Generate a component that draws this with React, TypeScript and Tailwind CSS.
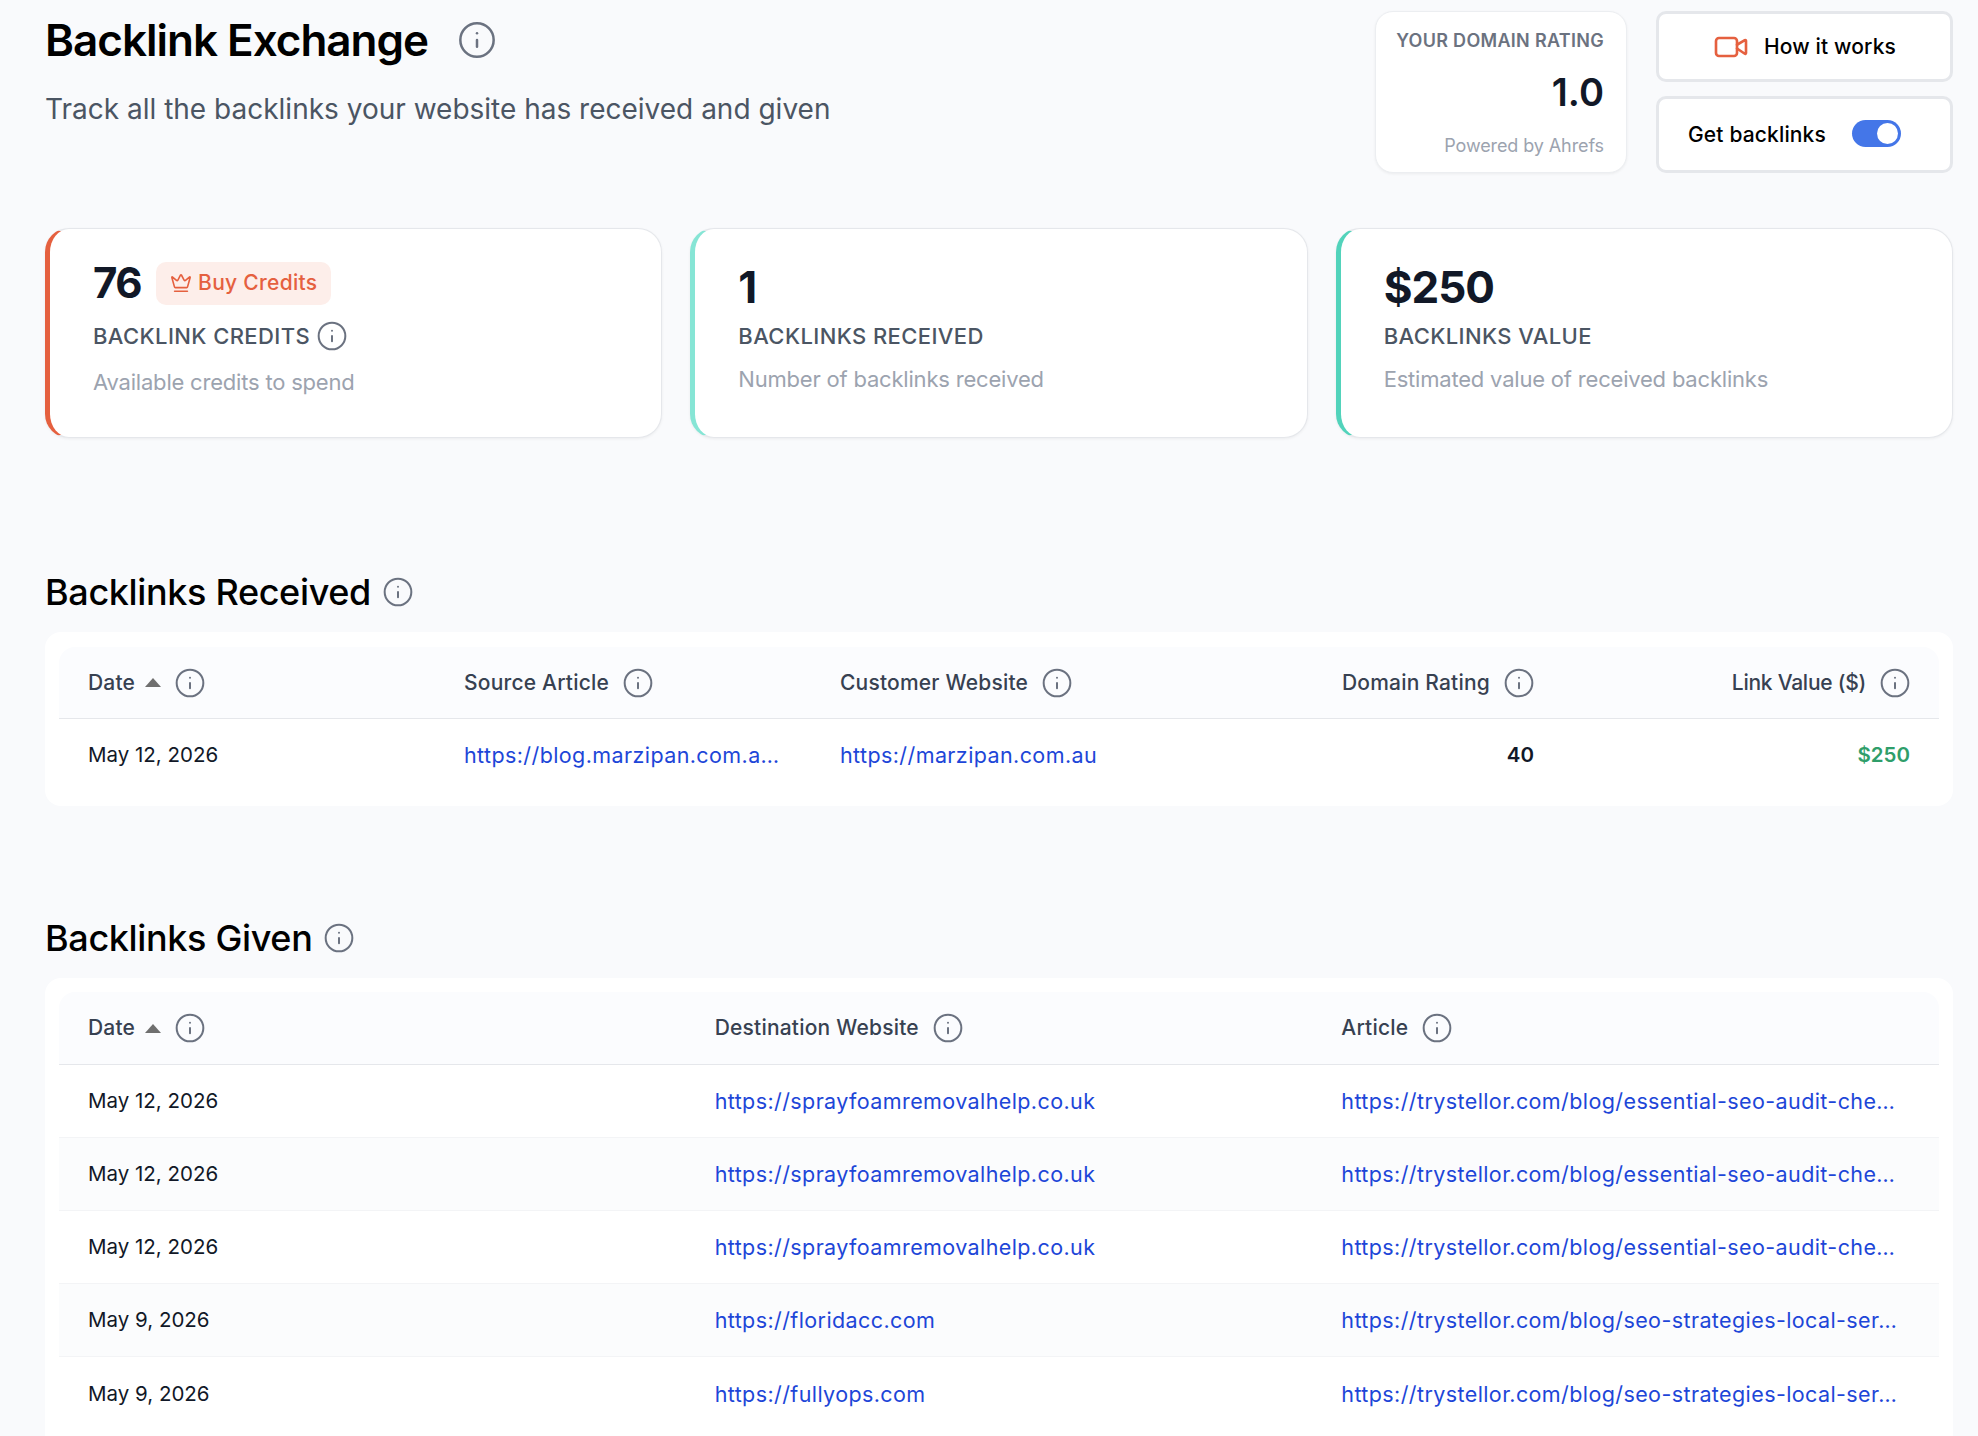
import React from 'react';
import { Crown, Info, Video } from 'lucide-react';

const InfoIcon = ({ className }: { className: string }) => (
  <Info className={`shrink-0 text-[#6b7280] ${className}`} strokeWidth={1.5} />
);

const HeaderCell = ({ label, sort, right, tight }: { label: string; sort?: boolean; right?: boolean; tight?: boolean }) => (
  <div className={`flex items-center px-[29px] ${right ? 'justify-end' : ''}`}>
    <span className={`text-[21px] font-medium text-[#374151] ${tight ? 'tracking-[-0.25px]' : 'tracking-[0.2px]'}`}>{label}</span>
    {sort && <span className="ml-[10px] h-0 w-0 border-x-[8.5px] border-b-[9px] border-x-transparent border-b-[#6f6f6f]" />}
    <InfoIcon className={`ml-[13px] h-[32px] w-[32px] ${right ? 'mr-[-1px]' : ''}`} />
  </div>
);

const LinkText = ({ children }: { children: string }) => (
  <div className="whitespace-nowrap text-[21.5px] leading-[28px] text-[#1d46d8] tracking-[0.4px]">{children}</div>
);

const StatCard = ({
  accent,
  value,
  label,
  note,
  extra,
  labelIcon,
  top,
}: {
  accent: string;
  value: string;
  label: string;
  note: string;
  extra?: React.ReactNode;
  labelIcon?: boolean;
  top: boolean;
}) => (
  <div className={`h-[210px] rounded-[24px] border border-[#e5e7eb] border-l-[5px] ${accent} bg-white px-[43px] shadow-[0_1px_3px_rgba(0,0,0,0.06)] ${top ? 'pt-[26px]' : 'pt-[30px]'}`}>
    <div className="flex items-center gap-[15px]">
      <span className={`font-bold leading-[56px] text-[#111827] ${top ? 'text-[42px] tracking-[-1.5px]' : 'text-[44px] tracking-[-1px]'}`}>{value}</span>
      {extra}
    </div>
    <div className={`flex items-center gap-[6px] text-[22px] font-medium text-[#4b5563] leading-[28px] tracking-[0.4px] ${top ? 'mt-[9px]' : 'mt-[7px]'}`}>
      {label}
      {labelIcon && <InfoIcon className="h-[32px] w-[32px]" />}
    </div>
    <div className={`text-[22px] leading-[28px] text-[#9ca3af] tracking-[-0.2px] ${top ? 'mt-[16px]' : 'mt-[15px]'}`}>{note}</div>
  </div>
);

const received = { date: 'May 12, 2026', source: 'https://blog.marzipan.com.a…', site: 'https://marzipan.com.au' };

const given = [
  { date: 'May 12, 2026', site: 'https://sprayfoamremovalhelp.co.uk', article: 'https://trystellor.com/blog/essential-seo-audit-che…' },
  { date: 'May 12, 2026', site: 'https://sprayfoamremovalhelp.co.uk', article: 'https://trystellor.com/blog/essential-seo-audit-che…' },
  { date: 'May 12, 2026', site: 'https://sprayfoamremovalhelp.co.uk', article: 'https://trystellor.com/blog/essential-seo-audit-che…' },
  { date: 'May 9, 2026', site: 'https://floridacc.com', article: 'https://trystellor.com/blog/seo-strategies-local-ser…' },
  { date: 'May 9, 2026', site: 'https://fullyops.com', article: 'https://trystellor.com/blog/seo-strategies-local-ser…' },
];

export default function App() {
  return (
    <div className="h-[1436px] overflow-hidden bg-[#f9fafc] pl-[45px] pr-[25px] pt-[11px] font-['Inter',sans-serif]">
      <div className="flex items-start justify-between">
        <div className="pt-[4px]">
          <div className="flex items-center gap-[29px]">
            <h1 className="text-[44px] font-semibold leading-[50px] text-black tracking-[-1px]">Backlink Exchange</h1>
            <InfoIcon className="h-[40px] w-[40px]" />
          </div>
          <p className="mt-[26px] text-[28px] leading-[36px] text-[#4b5563]">Track all the backlinks your website has received and given</p>
        </div>
        <div className="flex gap-[29px]">
          <div className="h-[162px] w-[252px] rounded-[18px] border border-[#eceef1] bg-white pr-[22px] pt-[16px] text-right shadow-[0_1px_3px_rgba(0,0,0,0.06)]">
            <div className="text-[18px] font-semibold leading-[26px] text-[#6b7280] tracking-[0.3px]">YOUR DOMAIN RATING</div>
            <div className="mt-[14px] text-[38px] font-semibold leading-[48px] text-[#111827]">1.0</div>
            <div className="mt-[18px] text-[18px] leading-[24px] text-[#9ca3af] tracking-[-0.1px]">Powered by Ahrefs</div>
          </div>
          <div className="flex w-[297px] flex-col gap-[14px]">
            <div className="flex h-[71px] items-center justify-center gap-[15px] rounded-[10px] border-[3px] border-[#e5e7eb] bg-white">
              <Video className="h-[36px] w-[36px] text-[#e5603f]" strokeWidth={1.75} />
              <span className="text-[21px] font-medium text-black tracking-[0.15px]">How it works</span>
            </div>
            <div className="flex h-[77px] items-center rounded-[10px] border-[3px] border-[#e5e7eb] bg-white pl-[29px]">
              <span className="text-[21px] font-medium text-black tracking-[0.15px]">Get backlinks</span>
              <span className="mb-[3px] ml-[26px] flex h-[27px] w-[49px] items-center justify-end rounded-full bg-[#4476e8] px-[3px]">
                <span className="h-[21px] w-[21px] rounded-full bg-white" />
              </span>
            </div>
          </div>
        </div>
      </div>

      <div className="mt-[55px] grid grid-cols-3 gap-[28px]">
        <StatCard
          accent="border-l-[#e5603f]"
          value="76"
          label="BACKLINK CREDITS"
          note="Available credits to spend"
          labelIcon
          top
          extra={
            <span className="flex h-[43px] items-center gap-[6px] rounded-[10px] bg-[#fdeeea] px-[14px] text-[21px] font-medium text-[#e5603f] tracking-[0.3px]">
              <Crown className="h-[22px] w-[22px]" strokeWidth={1.75} />
              Buy Credits
            </span>
          }
        />
        <StatCard accent="border-l-[#86e5d5]" value="1" label="BACKLINKS RECEIVED" note="Number of backlinks received" top={false} />
        <StatCard accent="border-l-[#52d3bb]" value="$250" label="BACKLINKS VALUE" note="Estimated value of received backlinks" top={false} />
      </div>

      <div className="mt-[131px] flex items-center gap-[11px]">
        <h2 className="text-[36px] font-medium leading-[46px] text-black tracking-[-0.35px]">Backlinks Received</h2>
        <InfoIcon className="h-[32px] w-[32px]" />
      </div>
      <div className="mt-[17px] rounded-[16px] bg-white px-[14px] py-[15px]">
        <div className="grid h-[72px] grid-cols-[376px_376px_501px_251px_376px] rounded-t-[16px] border-b border-[#e5e7eb] bg-[#fbfcfe]">
          <HeaderCell label="Date" sort />
          <HeaderCell label="Source Article" />
          <HeaderCell label="Customer Website" />
          <HeaderCell label="Domain Rating" right />
          <HeaderCell label="Link Value ($)" right tight />
        </div>
        <div className="grid h-[72px] grid-cols-[376px_376px_501px_251px_376px] items-center">
          <div className="px-[29px] text-[20.5px] leading-[28px] text-[#111827]">{received.date}</div>
          <div className="px-[29px]"><LinkText>{received.source}</LinkText></div>
          <div className="px-[29px]"><LinkText>{received.site}</LinkText></div>
          <div className="px-[29px] text-right text-[20.5px] font-semibold leading-[28px] text-[#111827]">40</div>
          <div className="px-[29px] text-right text-[20.5px] font-semibold leading-[28px] text-[#2f9e6a]">$250</div>
        </div>
      </div>

      <div className="mt-[109px] flex items-center gap-[11px]">
        <h2 className="text-[36px] font-medium leading-[46px] text-black tracking-[-0.35px]">Backlinks Given</h2>
        <InfoIcon className="h-[32px] w-[32px]" />
      </div>
      <div className="mt-[17px] rounded-t-[16px] bg-white px-[14px] pb-[40px] pt-[14px]">
        <div className="grid h-[73px] grid-cols-3 rounded-t-[16px] border-b border-[#e5e7eb] bg-[#fbfcfe]">
          <HeaderCell label="Date" sort />
          <HeaderCell label="Destination Website" />
          <HeaderCell label="Article" />
        </div>
        {given.map((row, index) => (
          <div key={index} className={`grid h-[73px] grid-cols-3 items-center ${index < 4 ? 'border-b border-[#f3f4f6]' : ''} ${index % 2 === 1 ? 'bg-[#fbfcfd]' : ''}`}>
            <div className="px-[29px] text-[20.5px] leading-[28px] text-[#111827]">{row.date}</div>
            <div className="px-[29px]"><LinkText>{row.site}</LinkText></div>
            <div className="px-[29px]"><LinkText>{row.article}</LinkText></div>
          </div>
        ))}
      </div>
    </div>
  );
}
